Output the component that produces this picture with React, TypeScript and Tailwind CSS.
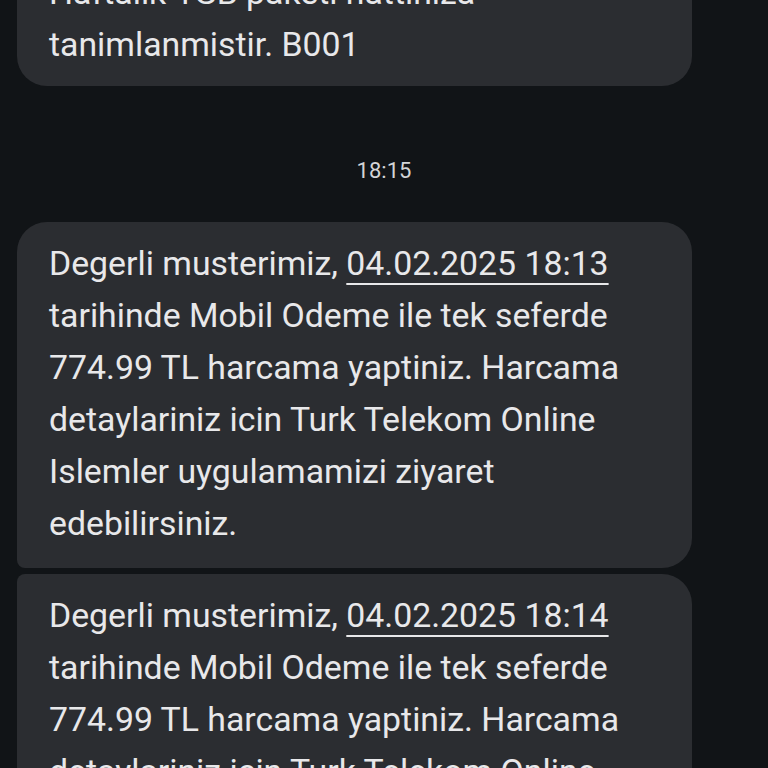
import React from "react";

const Date = ({ children }: { children: React.ReactNode }) => (
  <span className="underline decoration-2 underline-offset-[8px]">{children}</span>
);

export default function App() {
  return (
    <div
      className="w-[768px] h-[768px] overflow-hidden bg-[#111417] text-[#e8e8ea]"
      style={{ fontFamily: "Roboto, 'Noto Sans', sans-serif" }}
    >
      <div className="flex flex-col -mt-[49px]">
        <div className="ml-[17px] w-[675px] bg-[#2b2d31] rounded-[30px] px-[32px] pt-[16px] pb-[15px] text-[33.8px] leading-[52px]">
          Haftalik 1GB paketi hattiniza
          <br />
          tanimlanmistir. B001
        </div>
        <div className="flex justify-center pt-[70px] pb-[36px]">
          <span className="text-[22px] leading-[30px] text-[#d4d5d7]">18:15</span>
        </div>
        <div className="ml-[17px] w-[675px] bg-[#2b2d31] rounded-tl-[30px] rounded-tr-[30px] rounded-br-[30px] rounded-bl-[8px] px-[32px] pt-[16px] pb-[18px] text-[33.8px] leading-[52px]">
          Degerli musterimiz, <Date>04.02.2025 18:13</Date>
          <br />
          tarihinde Mobil Odeme ile tek seferde
          <br />
          774.99 TL harcama yaptiniz. Harcama
          <br />
          detaylariniz icin Turk Telekom Online
          <br />
          Islemler uygulamamizi ziyaret
          <br />
          edebilirsiniz.
        </div>
        <div className="ml-[17px] w-[675px] mt-[6px] bg-[#2b2d31] rounded-tl-[8px] rounded-tr-[30px] rounded-br-[30px] rounded-bl-[30px] px-[32px] pt-[16px] pb-[18px] text-[33.8px] leading-[52px]">
          Degerli musterimiz, <Date>04.02.2025 18:14</Date>
          <br />
          tarihinde Mobil Odeme ile tek seferde
          <br />
          774.99 TL harcama yaptiniz. Harcama
          <br />
          detaylariniz icin Turk Telekom Online
          <br />
          Islemler uygulamamizi ziyaret
          <br />
          edebilirsiniz.
        </div>
      </div>
    </div>
  );
}
